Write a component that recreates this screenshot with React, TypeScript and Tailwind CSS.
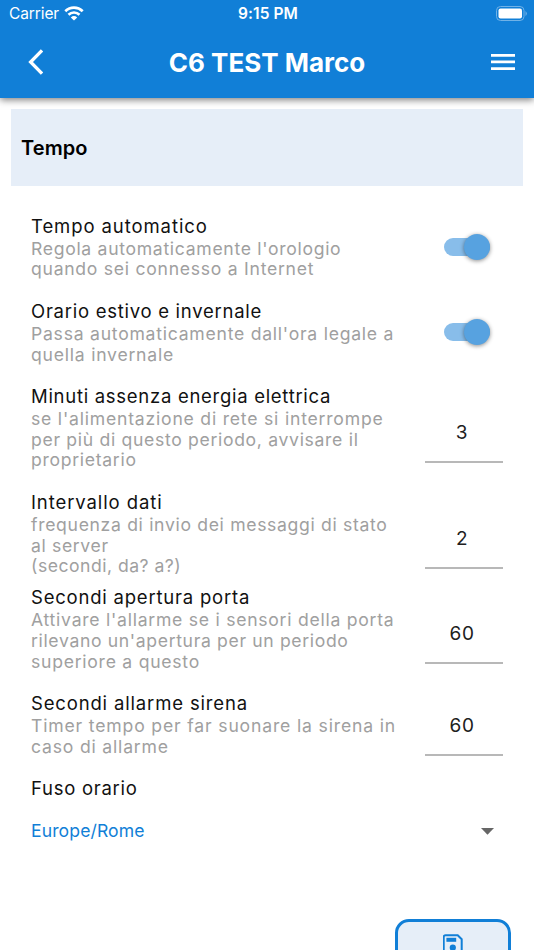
import React from "react";

type Line = [text: string, tracking: string];

function Label({ title, lines = [] }: { title: Line; lines?: Line[] }) {
  return (
    <div className="flex-1 whitespace-nowrap">
      <div className="h-[24.3px] leading-[22.3px] text-[18.5px] text-[#111111]">
        <span className={title[1]}>{title[0]}</span>
      </div>
      {lines.map(([text, tracking]) => (
        <div key={text} className="h-[20.65px] leading-[20.65px] text-[17.6px] text-[#a0a0a0]">
          <span className={tracking}>{text}</span>
        </div>
      ))}
    </div>
  );
}

function Toggle() {
  return (
    <div className="mt-[23px] mr-[13px] flex h-[18.5px] w-[46.5px] items-center justify-end rounded-full bg-[#88bdea]">
      <div className="size-[26px] shrink-0 rounded-full bg-[#57a2e0] shadow-[0_1px_4px_rgba(0,0,0,0.45)]" />
    </div>
  );
}

function NumberField({ value, short }: { value: string; short?: boolean }) {
  return (
    <div
      className={`flex w-[78px] flex-col justify-end border-b-2 border-[#b8b8b8] pr-[4px] pb-[16px] text-center text-[19px] leading-[24px] tracking-[0.6px] text-[#202020] ${
        short ? "h-[64px]" : "h-[78px]"
      }`}
    >
      {value}
    </div>
  );
}

export default function App() {
  return (
    <div className="flex h-[950px] w-[534px] flex-col overflow-hidden bg-white font-['Inter','Liberation_Sans',sans-serif]">
      <header className="z-10 flex h-[98px] shrink-0 flex-col bg-[#117fd7] text-white shadow-[0_2px_7px_rgba(0,0,0,0.5)]">
        <div className="grid h-[27px] grid-cols-3 items-center pl-[9px] pr-[7px]">
          <div className="flex items-center gap-[5px] pt-px">
            <span className="text-[15.5px] tracking-[-0.1px]">Carrier</span>
            <svg className="-mt-px" width="20" height="15" viewBox="0 0 20 15" fill="none" stroke="white" strokeWidth="2.7">
              <path d="M1.3 5.2a12.6 12.6 0 0 1 17.4 0" />
              <path d="M4.5 8.7a8 8 0 0 1 11 0" />
              <path d="M10 14.6L6.8 11.4a4.7 4.7 0 0 1 6.4 0z" fill="white" stroke="none" />
            </svg>
          </div>
          <span className="pt-px text-center text-[15.5px] font-semibold tracking-[0.1px]">9:15 PM</span>
          <svg className="justify-self-end" width="31" height="15" viewBox="0 0 31 15">
            <rect x="0.5" y="0.5" width="27.5" height="14" rx="4" fill="none" stroke="#70b2e7" />
            <rect x="2.5" y="2.5" width="23.5" height="10" rx="2" fill="white" />
            <path d="M29.5 5v5q1.3-1 1.3-2.5T29.5 5z" fill="#70b2e7" />
          </svg>
        </div>
        <div className="flex h-[71px] items-center justify-between pl-[28px] pr-[19px]">
          <svg className="-mt-px" width="15" height="26" viewBox="0 0 15 26" fill="none" stroke="white" strokeWidth="3.3">
            <path d="M14 1.3L2.6 13l11.4 11.7" />
          </svg>
          <h1 className="text-[26px] font-bold whitespace-nowrap">C6 TEST Marco</h1>
          <svg className="-mt-px" width="24" height="16" viewBox="0 0 24 16" fill="white">
            <path d="M0 0h24v2.7H0zM0 6.6h24v2.7H0zM0 13.2h24v2.7H0z" />
          </svg>
        </div>
      </header>

      <section className="mx-[11px] mt-[11px] flex h-[77px] shrink-0 items-center bg-[#e6eef8] pt-px pl-[10px]">
        <h2 className="text-[20px] font-semibold tracking-[0.1px] text-black">Tempo</h2>
      </section>

      <main className="flex flex-col pt-[28.5px] pr-[31px] pl-[31px]">
        <div className="flex h-[85.2px]">
          <Label
            title={["Tempo automatico", "tracking-[0.91px]"]}
            lines={[
              ["Regola automaticamente l'orologio", "tracking-[0.69px]"],
              ["quando sei connesso a Internet", "tracking-[0.73px]"],
            ]}
          />
          <Toggle />
        </div>
        <div className="flex h-[85.2px]">
          <Label
            title={["Orario estivo e invernale", "tracking-[0.73px]"]}
            lines={[
              ["Passa automaticamente dall'ora legale a", "tracking-[0.75px]"],
              ["quella invernale", "tracking-[0.77px]"],
            ]}
          />
          <Toggle />
        </div>
        <div className="flex h-[105.8px]">
          <Label
            title={["Minuti assenza energia elettrica", "tracking-[0.71px]"]}
            lines={[
              ["se l'alimentazione di rete si interrompe", "tracking-[0.79px]"],
              ["per più di questo periodo, avvisare il", "tracking-[0.68px]"],
              ["proprietario", "tracking-[0.7px]"],
            ]}
          />
          <NumberField value="3" />
        </div>
        <div className="flex h-[95.5px]">
          <Label
            title={["Intervallo dati", "tracking-[0.9px]"]}
            lines={[
              ["frequenza di invio dei messaggi di stato", "tracking-[0.67px]"],
              ["al server", "tracking-[0.64px]"],
              ["(secondi, da? a?)", "tracking-[0.49px]"],
            ]}
          />
          <NumberField value="2" />
        </div>
        <div className="flex h-[105.8px]">
          <Label
            title={["Secondi apertura porta", "tracking-[0.79px]"]}
            lines={[
              ["Attivare l'allarme se i sensori della porta", "tracking-[0.74px]"],
              ["rilevano un'apertura per un periodo", "tracking-[0.65px]"],
              ["superiore a questo", "tracking-[0.74px]"],
            ]}
          />
          <NumberField value="60" />
        </div>
        <div className="flex h-[85.2px]">
          <Label
            title={["Secondi allarme sirena", "tracking-[0.84px]"]}
            lines={[
              ["Timer tempo per far suonare la sirena in", "tracking-[0.83px]"],
              ["caso di allarme", "tracking-[0.81px]"],
            ]}
          />
          <NumberField value="60" short />
        </div>
        <Label title={["Fuso orario", "tracking-[0.72px]"]} />
        <div className="mt-[18.5px] flex h-[24px] items-center justify-between pr-[9px]">
          <span className="-mt-[2px] text-[17.6px] tracking-[0.1px] text-[#117fd7]">Europe/Rome</span>
          <svg width="13" height="7" viewBox="0 0 13 7" fill="#666666">
            <path d="M0 0h13L6.5 6.7z" />
          </svg>
        </div>
      </main>

      <button className="mt-[75px] ml-[394.5px] flex h-[60px] w-[116.5px] shrink-0 justify-center rounded-[14px] border-3 border-[#117fd7] bg-[#e6eef8] pt-[12px]">
        <svg width="20" height="20" viewBox="0 0 20 20" fill="none">
          <path d="M2.5 1.2h12.2l4 4v12a1.8 1.8 0 0 1-1.8 1.8H2.5a1.8 1.8 0 0 1-1.8-1.8V3a1.8 1.8 0 0 1 1.8-1.8z" stroke="#117fd7" strokeWidth="2" />
          <path d="M3.4 3.8h9.8v4H3.4z" fill="#117fd7" />
          <circle cx="9.8" cy="13.7" r="3.1" fill="#117fd7" />
        </svg>
      </button>
    </div>
  );
}
